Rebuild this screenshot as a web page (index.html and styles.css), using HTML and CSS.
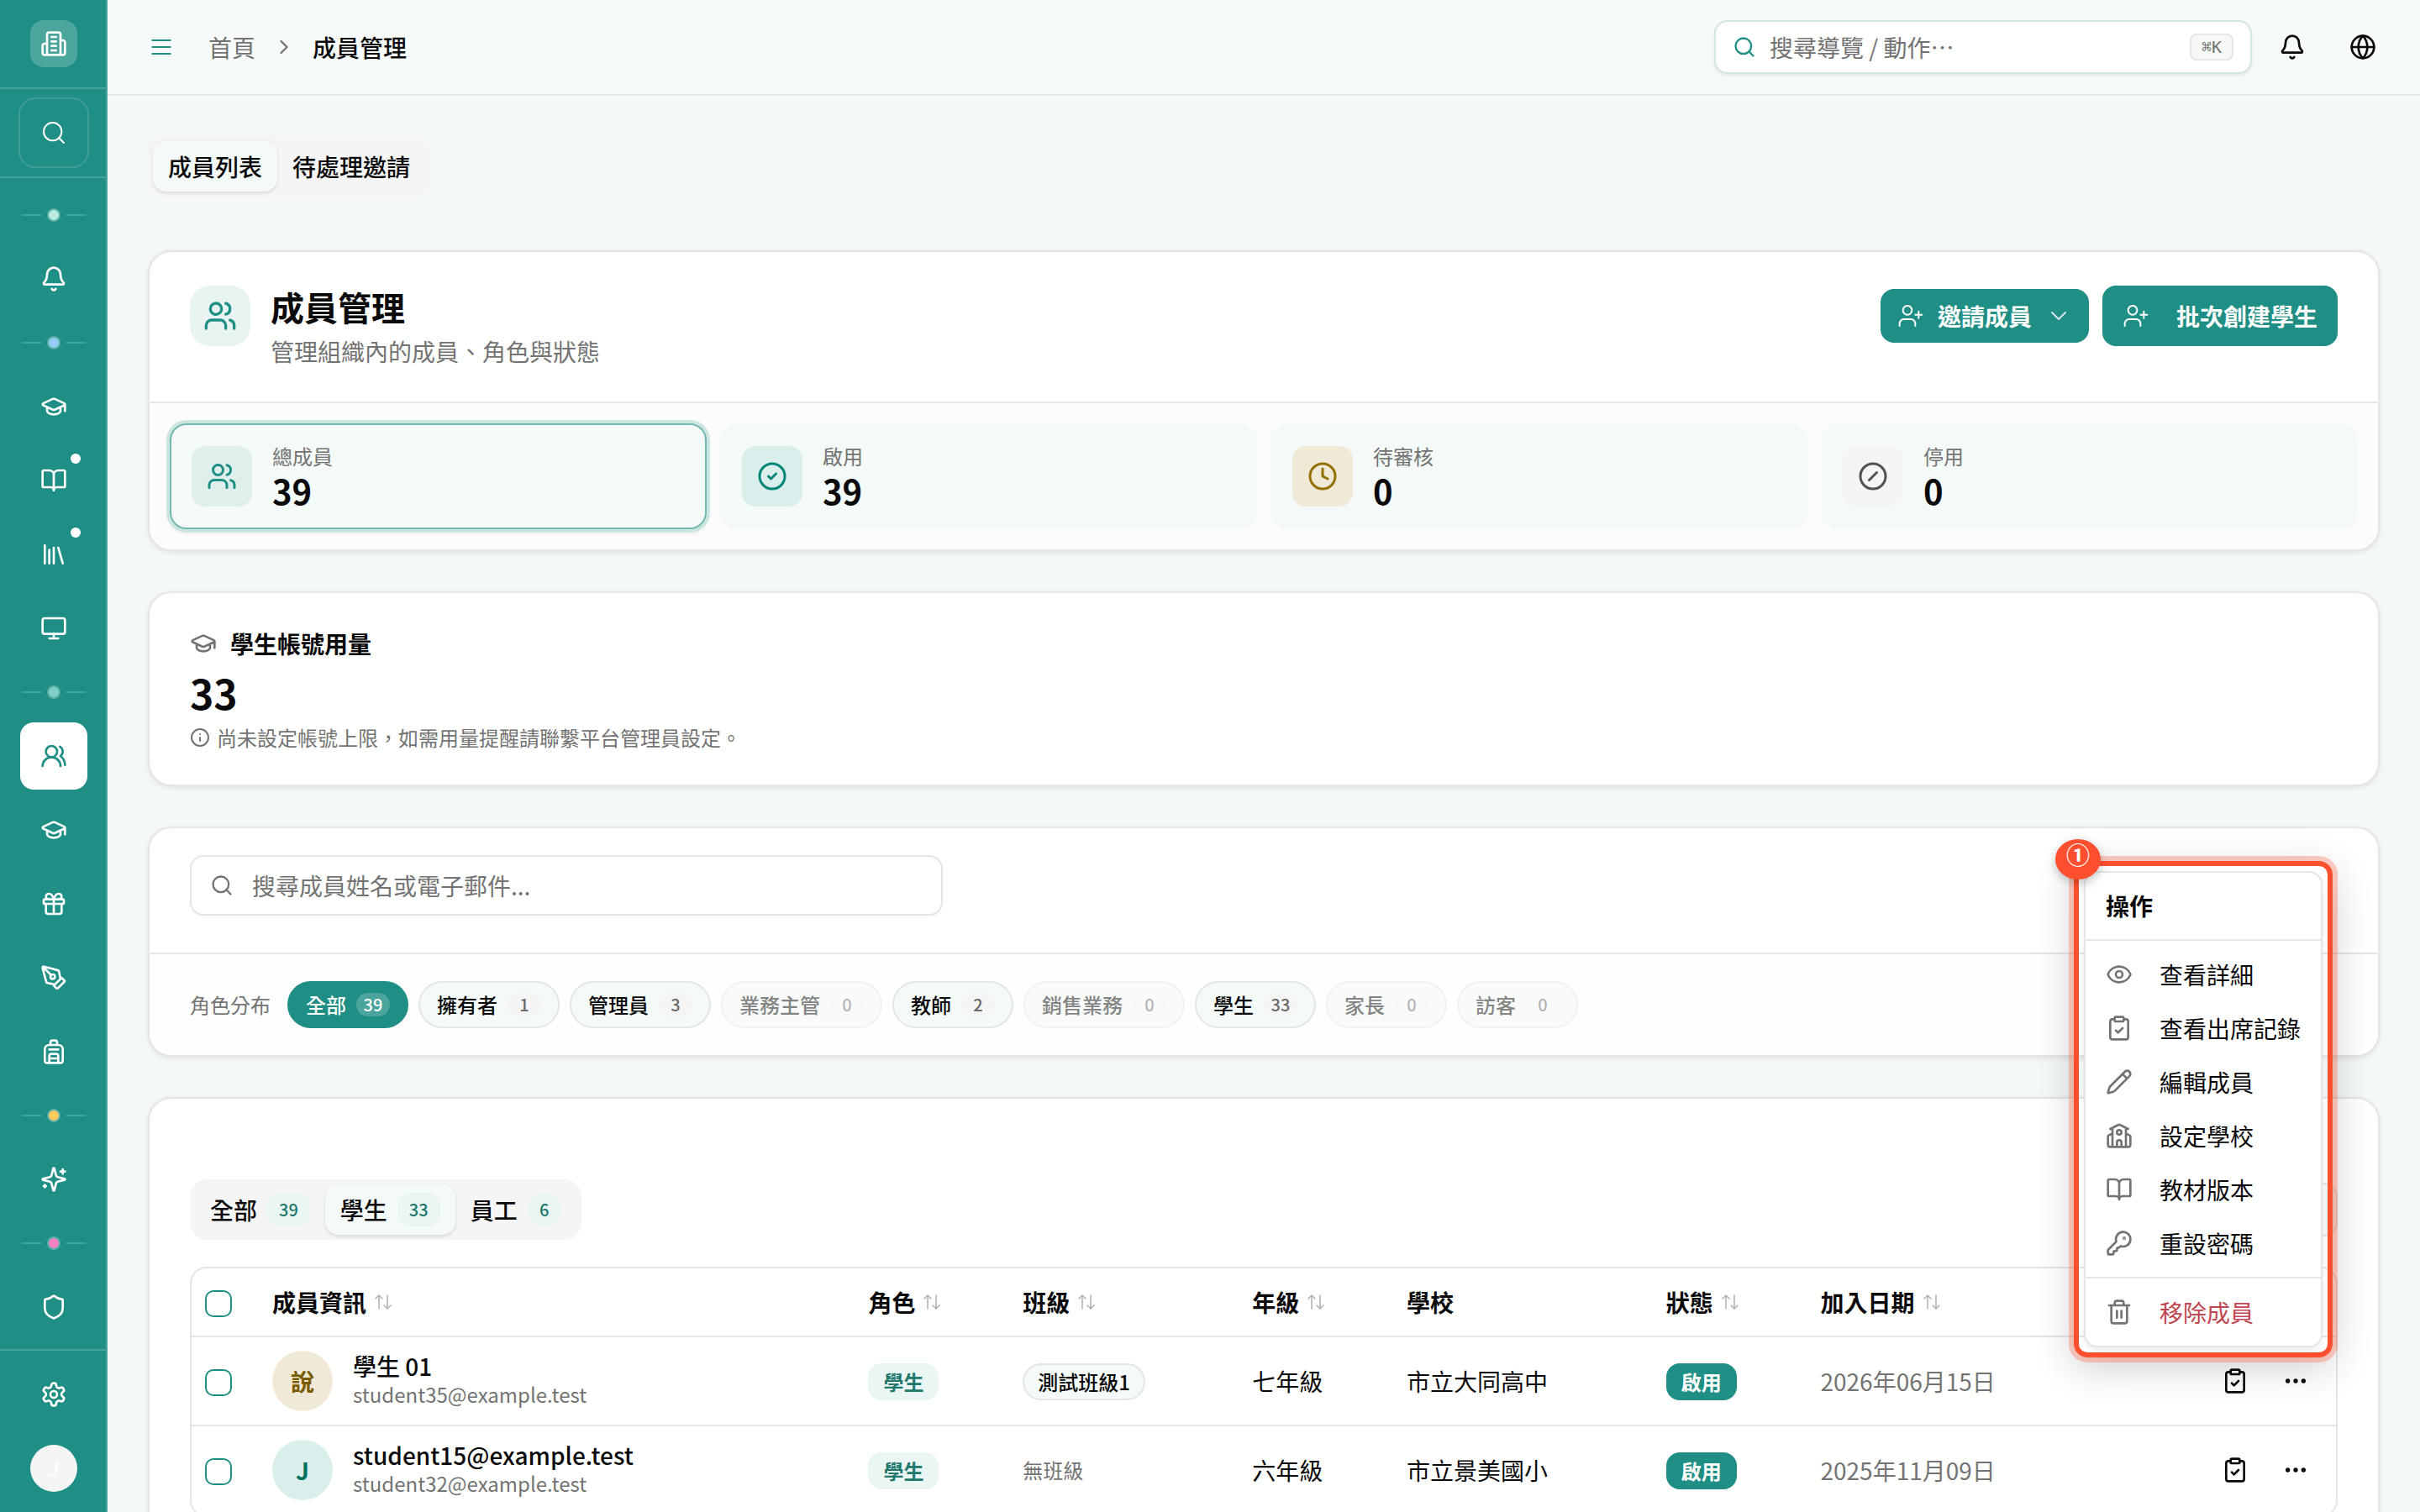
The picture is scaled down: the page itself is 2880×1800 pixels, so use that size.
FILE: index.html
```html
<!DOCTYPE html>
<html lang="zh-Hant-TW">
<head>
<meta charset="utf-8">
<meta name="viewport" content="width=device-width, initial-scale=1">
<title>成員管理</title>
<link rel="stylesheet" href="styles.css">
</head>
<body>
<svg class="sprite" aria-hidden="true">
  <symbol id="i-building" viewBox="0 0 24 24"><path d="M6 22V4a2 2 0 0 1 2-2h8a2 2 0 0 1 2 2v18ZM6 12H4a2 2 0 0 0-2 2v6a2 2 0 0 0 2 2h2M18 9h2a2 2 0 0 1 2 2v9a2 2 0 0 1-2 2h-2M10 6h4M10 10h4M10 14h4M10 18h4"/></symbol>
  <symbol id="i-search" viewBox="0 0 24 24"><circle cx="11" cy="11" r="8"/><path d="m21 21-4.34-4.34"/></symbol>
  <symbol id="i-bell" viewBox="0 0 24 24"><path d="M10.268 21a2 2 0 0 0 3.464 0M3.262 15.326A1 1 0 0 0 4 17h16a1 1 0 0 0 .74-1.673C19.41 13.956 18 12.499 18 8A6 6 0 0 0 6 8c0 4.499-1.411 5.956-2.738 7.326"/></symbol>
  <symbol id="i-cap" viewBox="0 0 24 24"><path d="M21.42 10.922a1 1 0 0 0-.019-1.838L12.83 5.18a2 2 0 0 0-1.66 0L2.6 9.08a1 1 0 0 0 0 1.832l8.57 3.908a2 2 0 0 0 1.66 0zM22 10v6M6 12.5V16a6 3 0 0 0 12 0v-3.5"/></symbol>
  <symbol id="i-book" viewBox="0 0 24 24"><path d="M12 7v14M3 18a1 1 0 0 1-1-1V4a1 1 0 0 1 1-1h5a4 4 0 0 1 4 4 4 4 0 0 1 4-4h5a1 1 0 0 1 1 1v13a1 1 0 0 1-1 1h-6a3 3 0 0 0-3 3 3 3 0 0 0-3-3z"/></symbol>
  <symbol id="i-library" viewBox="0 0 24 24"><path d="m16 6 4 14M12 6v14M8 8v12M4 4v16"/></symbol>
  <symbol id="i-monitor" viewBox="0 0 24 24"><rect x="2" y="3" width="20" height="14" rx="2"/><path d="M8 21h8M12 17v4"/></symbol>
  <symbol id="i-users-round" viewBox="0 0 24 24"><path d="M18 21a8 8 0 0 0-16 0"/><circle cx="10" cy="8" r="5"/><path d="M22 20c0-3.37-2-6.5-4-8a5 5 0 0 0-.45-8.3"/></symbol>
  <symbol id="i-gift" viewBox="0 0 24 24"><rect x="3" y="8" width="18" height="4" rx="1"/><path d="M12 8v13M19 12v7a2 2 0 0 1-2 2H7a2 2 0 0 1-2-2v-7M7.5 8a2.5 2.5 0 0 1 0-5A4.8 8 0 0 1 12 8a4.8 8 0 0 1 4.5-5 2.5 2.5 0 0 1 0 5"/></symbol>
  <symbol id="i-pen-tool" viewBox="0 0 24 24"><path d="M15.707 21.293a1 1 0 0 1-1.414 0l-1.586-1.586a1 1 0 0 1 0-1.414l5.586-5.586a1 1 0 0 1 1.414 0l1.586 1.586a1 1 0 0 1 0 1.414zM18 13l-1.375-6.874a1 1 0 0 0-.746-.776L3.235 2.028a1 1 0 0 0-1.207 1.207L5.35 15.879a1 1 0 0 0 .776.746L13 18M2.3 2.3l7.286 7.286"/><circle cx="11" cy="11" r="2"/></symbol>
  <symbol id="i-backpack" viewBox="0 0 24 24"><path d="M4 10a4 4 0 0 1 4-4h8a4 4 0 0 1 4 4v10a2 2 0 0 1-2 2H6a2 2 0 0 1-2-2zM8 10h8M8 18h8M8 22v-6a2 2 0 0 1 2-2h4a2 2 0 0 1 2 2v6M9 6V4a2 2 0 0 1 2-2h2a2 2 0 0 1 2 2v2"/></symbol>
  <symbol id="i-sparkles" viewBox="0 0 24 24"><path d="M9.937 15.5A2 2 0 0 0 8.5 14.063l-6.135-1.582a.5.5 0 0 1 0-.962L8.5 9.936A2 2 0 0 0 9.937 8.5l1.582-6.135a.5.5 0 0 1 .963 0L14.063 8.5A2 2 0 0 0 15.5 9.937l6.135 1.581a.5.5 0 0 1 0 .964L15.5 14.063a2 2 0 0 0-1.437 1.437l-1.582 6.135a.5.5 0 0 1-.963 0zM20 3v4M22 5h-4M4 17v2M5 18H3"/></symbol>
  <symbol id="i-shield" viewBox="0 0 24 24"><path d="M20 13c0 5-3.5 7.5-7.66 8.95a1 1 0 0 1-.67-.01C7.5 20.5 4 18 4 13V6a1 1 0 0 1 1-1c2 0 4.5-1.2 6.24-2.72a1.17 1.17 0 0 1 1.52 0C14.51 3.81 17 5 19 5a1 1 0 0 1 1 1z"/></symbol>
  <symbol id="i-settings" viewBox="0 0 24 24"><path d="M12.22 2h-.44a2 2 0 0 0-2 2v.18a2 2 0 0 1-1 1.73l-.43.25a2 2 0 0 1-2 0l-.15-.08a2 2 0 0 0-2.73.73l-.22.38a2 2 0 0 0 .73 2.73l.15.1a2 2 0 0 1 1 1.72v.51a2 2 0 0 1-1 1.74l-.15.09a2 2 0 0 0-.73 2.73l.22.38a2 2 0 0 0 2.73.73l.15-.08a2 2 0 0 1 2 0l.43.25a2 2 0 0 1 1 1.73V20a2 2 0 0 0 2 2h.44a2 2 0 0 0 2-2v-.18a2 2 0 0 1 1-1.73l.43-.25a2 2 0 0 1 2 0l.15.08a2 2 0 0 0 2.73-.73l.22-.39a2 2 0 0 0-.73-2.73l-.15-.08a2 2 0 0 1-1-1.74v-.5a2 2 0 0 1 1-1.74l.15-.09a2 2 0 0 0 .73-2.73l-.22-.38a2 2 0 0 0-2.73-.73l-.15.08a2 2 0 0 1-2 0l-.43-.25a2 2 0 0 1-1-1.73V4a2 2 0 0 0-2-2z"/><circle cx="12" cy="12" r="3"/></symbol>
  <symbol id="i-menu" viewBox="0 0 24 24"><path d="M4 6h16M4 12h16M4 18h16"/></symbol>
  <symbol id="i-chevron-right" viewBox="0 0 24 24"><path d="m9 18 6-6-6-6"/></symbol>
  <symbol id="i-chevron-down" viewBox="0 0 24 24"><path d="m6 9 6 6 6-6"/></symbol>
  <symbol id="i-globe" viewBox="0 0 24 24"><circle cx="12" cy="12" r="10"/><path d="M12 2a14.5 14.5 0 0 0 0 20 14.5 14.5 0 0 0 0-20M2 12h20"/></symbol>
  <symbol id="i-users" viewBox="0 0 24 24"><path d="M16 21v-2a4 4 0 0 0-4-4H6a4 4 0 0 0-4 4v2"/><circle cx="9" cy="7" r="4"/><path d="M22 21v-2a4 4 0 0 0-3-3.87M16 3.13a4 4 0 0 1 0 7.75"/></symbol>
  <symbol id="i-user-plus" viewBox="0 0 24 24"><path d="M16 21v-2a4 4 0 0 0-4-4H6a4 4 0 0 0-4 4v2"/><circle cx="9" cy="7" r="4"/><path d="M19 8v6M22 11h-6"/></symbol>
  <symbol id="i-check-circle" viewBox="0 0 24 24"><circle cx="12" cy="12" r="10"/><path d="m9 12 2 2 4-4"/></symbol>
  <symbol id="i-clock" viewBox="0 0 24 24"><circle cx="12" cy="12" r="10"/><path d="M12 6v6l4 2"/></symbol>
  <symbol id="i-slash-circle" viewBox="0 0 24 24"><circle cx="12" cy="12" r="10"/><path d="m9 15 6-6"/></symbol>
  <symbol id="i-info" viewBox="0 0 24 24"><circle cx="12" cy="12" r="10"/><path d="M12 16v-4M12 8h.01"/></symbol>
  <symbol id="i-sort" viewBox="0 0 24 24"><path d="m21 16-4 4-4-4M17 20V4M3 8l4-4 4 4M7 4v16"/></symbol>
  <symbol id="i-eye" viewBox="0 0 24 24"><path d="M2.062 12.348a1 1 0 0 1 0-.696 10.75 10.75 0 0 1 19.876 0 1 1 0 0 1 0 .696 10.75 10.75 0 0 1-19.876 0"/><circle cx="12" cy="12" r="3"/></symbol>
  <symbol id="i-clipboard" viewBox="0 0 24 24"><rect x="8" y="2" width="8" height="4" rx="1"/><path d="M16 4h2a2 2 0 0 1 2 2v14a2 2 0 0 1-2 2H6a2 2 0 0 1-2-2V6a2 2 0 0 1 2-2h2M9 14l2 2 4-4"/></symbol>
  <symbol id="i-pencil" viewBox="0 0 24 24"><path d="M21.174 6.812a1 1 0 0 0-3.986-3.987L3.842 16.174a2 2 0 0 0-.5.83l-1.321 4.352a.5.5 0 0 0 .623.622l4.353-1.32a2 2 0 0 0 .83-.497zM15 5l4 4"/></symbol>
  <symbol id="i-school" viewBox="0 0 24 24"><path d="M14 22v-4a2 2 0 1 0-4 0v4M18 10l3.447 1.724a1 1 0 0 1 .553.894V20a2 2 0 0 1-2 2H4a2 2 0 0 1-2-2v-7.382a1 1 0 0 1 .553-.894L6 10M18 5v17M4 6l7.106-3.553a2 2 0 0 1 1.788 0L20 6M6 5v17"/><circle cx="12" cy="9" r="2"/></symbol>
  <symbol id="i-key" viewBox="0 0 24 24"><path d="M2.586 17.414A2 2 0 0 0 2 18.828V21a1 1 0 0 0 1 1h3a1 1 0 0 0 1-1v-1a1 1 0 0 1 1-1h1a1 1 0 0 0 1-1v-1a1 1 0 0 1 1-1h.172a2 2 0 0 0 1.414-.586l.814-.814a6.5 6.5 0 1 0-4-4z"/><circle cx="16.5" cy="7.5" r=".5"/></symbol>
  <symbol id="i-trash" viewBox="0 0 24 24"><path d="M3 6h18M19 6v14a2 2 0 0 1-2 2H7a2 2 0 0 1-2-2V6M8 6V4a2 2 0 0 1 2-2h4a2 2 0 0 1 2 2v2M10 11v6M14 11v6"/></symbol>
  <symbol id="i-dots" viewBox="0 0 24 24"><circle cx="12" cy="12" r="1"/><circle cx="19" cy="12" r="1"/><circle cx="5" cy="12" r="1"/></symbol>
</svg>

<div class="app">
  <aside class="sidebar">
    <div class="sidebar-brand"><a class="brand" href="#" aria-label="組織"><svg class="icon"><use href="#i-building"/></svg></a></div>
    <div class="sidebar-search"><button class="side-search-btn" type="button" aria-label="搜尋"><svg class="icon thin"><use href="#i-search"/></svg></button></div>
    <nav class="sidebar-nav" aria-label="主選單">
      <div class="nav-sep dot-mint"><i></i></div>
      <a class="nav-item" href="#" aria-label="通知"><svg class="icon"><use href="#i-bell"/></svg></a>
      <div class="nav-sep dot-blue"><i></i></div>
      <div class="nav-group">
        <a class="nav-item" href="#" aria-label="課程"><svg class="icon"><use href="#i-cap"/></svg></a>
        <a class="nav-item has-dot" href="#" aria-label="教材"><svg class="icon"><use href="#i-book"/></svg></a>
        <a class="nav-item has-dot" href="#" aria-label="題庫"><svg class="icon"><use href="#i-library"/></svg></a>
        <a class="nav-item" href="#" aria-label="螢幕"><svg class="icon"><use href="#i-monitor"/></svg></a>
      </div>
      <div class="nav-sep dot-teal"><i></i></div>
      <div class="nav-group">
        <a class="nav-item active" href="#" aria-label="成員管理" aria-current="page"><svg class="icon"><use href="#i-users-round"/></svg></a>
        <a class="nav-item" href="#" aria-label="班級"><svg class="icon"><use href="#i-cap"/></svg></a>
        <a class="nav-item" href="#" aria-label="獎勵"><svg class="icon"><use href="#i-gift"/></svg></a>
        <a class="nav-item" href="#" aria-label="設計"><svg class="icon"><use href="#i-pen-tool"/></svg></a>
        <a class="nav-item" href="#" aria-label="書包"><svg class="icon"><use href="#i-backpack"/></svg></a>
      </div>
      <div class="nav-sep dot-amber"><i></i></div>
      <a class="nav-item" href="#" aria-label="AI 工具"><svg class="icon"><use href="#i-sparkles"/></svg></a>
      <div class="nav-sep dot-pink"><i></i></div>
      <a class="nav-item" href="#" aria-label="權限"><svg class="icon"><use href="#i-shield"/></svg></a>
    </nav>
    <div class="sidebar-foot">
      <a class="nav-item" href="#" aria-label="設定"><svg class="icon"><use href="#i-settings"/></svg></a>
      <button class="me" type="button">J</button>
    </div>
  </aside>

  <div class="page">
    <header class="topbar">
      <button class="menu-btn" type="button" aria-label="切換側欄"><svg class="icon thin"><use href="#i-menu"/></svg></button>
      <nav class="crumbs" aria-label="麵包屑">
        <a href="#">首頁</a>
        <svg class="icon s28"><use href="#i-chevron-right"/></svg>
        <span aria-current="page">成員管理</span>
      </nav>
      <label class="global-search">
        <svg class="icon s28"><use href="#i-search"/></svg>
        <input type="text" placeholder="搜尋導覽 / 動作⋯" aria-label="搜尋導覽 / 動作">
        <kbd>⌘K</kbd>
      </label>
      <div class="top-actions">
        <button class="icon-btn" type="button" aria-label="通知"><svg class="icon"><use href="#i-bell"/></svg></button>
        <button class="icon-btn" type="button" aria-label="語言"><svg class="icon"><use href="#i-globe"/></svg></button>
      </div>
    </header>

    <main class="content">
      <div class="tabs page-tabs" role="tablist">
        <button class="tab active" type="button" role="tab" aria-selected="true">成員列表</button>
        <button class="tab" type="button" role="tab" aria-selected="false">待處理邀請</button>
      </div>

      <section class="card">
        <div class="intro">
          <span class="intro-icon"><svg class="icon s40"><use href="#i-users"/></svg></span>
          <div class="intro-text">
            <h1>成員管理</h1>
            <p>管理組織內的成員、角色與狀態</p>
          </div>
          <div class="intro-actions">
            <button class="btn" type="button"><svg class="icon thin"><use href="#i-user-plus"/></svg>邀請成員<svg class="icon thin faded"><use href="#i-chevron-down"/></svg></button>
            <button class="btn btn-lg" type="button"><svg class="icon thin"><use href="#i-user-plus"/></svg>批次創建學生</button>
          </div>
        </div>
        <div class="stats">
          <button class="stat selected" type="button"><span class="stat-icon primary"><svg class="icon s36"><use href="#i-users"/></svg></span><span class="stat-text"><span class="stat-label">總成員</span><strong>39</strong></span></button>
          <button class="stat" type="button"><span class="stat-icon ok"><svg class="icon s36"><use href="#i-check-circle"/></svg></span><span class="stat-text"><span class="stat-label">啟用</span><strong>39</strong></span></button>
          <button class="stat" type="button"><span class="stat-icon wait"><svg class="icon s36"><use href="#i-clock"/></svg></span><span class="stat-text"><span class="stat-label">待審核</span><strong>0</strong></span></button>
          <button class="stat" type="button"><span class="stat-icon off"><svg class="icon s36"><use href="#i-slash-circle"/></svg></span><span class="stat-text"><span class="stat-label">停用</span><strong>0</strong></span></button>
        </div>
      </section>

      <section class="card usage">
        <h2><svg class="icon"><use href="#i-cap"/></svg>學生帳號用量</h2>
        <strong class="usage-count">33</strong>
        <p><svg class="icon s24"><use href="#i-info"/></svg>尚未設定帳號上限，如需用量提醒請聯繫平台管理員設定。</p>
      </section>

      <section class="card">
        <div class="filter-search">
          <label class="search-box">
            <svg class="icon s28"><use href="#i-search"/></svg>
            <input type="text" placeholder="搜尋成員姓名或電子郵件..." aria-label="搜尋成員姓名或電子郵件">
          </label>
        </div>
        <div class="roles">
          <span class="roles-label">角色分布</span>
          <div class="chips">
            <button class="chip active" type="button">全部<span>39</span></button>
            <button class="chip" type="button">擁有者<span>1</span></button>
            <button class="chip" type="button">管理員<span>3</span></button>
            <button class="chip" type="button" disabled>業務主管<span>0</span></button>
            <button class="chip" type="button">教師<span>2</span></button>
            <button class="chip" type="button" disabled>銷售業務<span>0</span></button>
            <button class="chip" type="button">學生<span>33</span></button>
            <button class="chip" type="button" disabled>家長<span>0</span></button>
            <button class="chip" type="button" disabled>訪客<span>0</span></button>
          </div>
        </div>
      </section>

      <section class="card list">
        <div class="list-head">
          <div class="tabs" role="tablist">
            <button class="tab" type="button" role="tab" aria-selected="false">全部<span>39</span></button>
            <button class="tab active" type="button" role="tab" aria-selected="true">學生<span>33</span></button>
            <button class="tab" type="button" role="tab" aria-selected="false">員工<span>6</span></button>
          </div>
          <button class="columns-btn" type="button" aria-label="顯示欄位"></button>
        </div>
        <div class="table-wrap">
          <table>
            <colgroup><col class="c-check"><col class="c-info"><col class="c-role"><col class="c-class"><col class="c-grade"><col class="c-school"><col class="c-status"><col class="c-date"><col class="c-act"></colgroup>
            <thead>
              <tr>
                <th><input type="checkbox" aria-label="全選"></th>
                <th><button class="sort" type="button">成員資訊<svg class="icon s24 thin"><use href="#i-sort"/></svg></button></th>
                <th><button class="sort" type="button">角色<svg class="icon s24 thin"><use href="#i-sort"/></svg></button></th>
                <th><button class="sort" type="button">班級<svg class="icon s24 thin"><use href="#i-sort"/></svg></button></th>
                <th><button class="sort" type="button">年級<svg class="icon s24 thin"><use href="#i-sort"/></svg></button></th>
                <th>學校</th>
                <th><button class="sort" type="button">狀態<svg class="icon s24 thin"><use href="#i-sort"/></svg></button></th>
                <th><button class="sort" type="button">加入日期<svg class="icon s24 thin"><use href="#i-sort"/></svg></button></th>
                <th></th>
              </tr>
            </thead>
            <tbody>
              <tr>
                <td><input type="checkbox" aria-label="選取 學生 01"></td>
                <td><div class="member"><span class="avatar sand">說</span><div class="member-text"><div class="member-name">學生 01</div><div class="member-mail">student35@example.test</div></div></div></td>
                <td><span class="badge soft">學生</span></td>
                <td><span class="badge outline">測試班級1</span></td>
                <td>七年級</td>
                <td>市立大同高中</td>
                <td><span class="badge solid">啟用</span></td>
                <td class="muted">2026年06月15日</td>
                <td>
                  <div class="row-actions">
                    <button class="row-btn" type="button" aria-label="出席記錄"><svg class="icon"><use href="#i-clipboard"/></svg></button>
                    <button class="row-btn" type="button" aria-label="更多操作"><svg class="icon"><use href="#i-dots"/></svg></button>
                    <div class="callout">
                      <span class="callout-no">①</span>
                      <div class="menu" role="menu" aria-label="操作">
                        <div class="menu-title">操作</div>
                        <div class="menu-group">
                          <button type="button" role="menuitem"><svg class="icon"><use href="#i-eye"/></svg>查看詳細</button>
                          <button type="button" role="menuitem"><svg class="icon"><use href="#i-clipboard"/></svg>查看出席記錄</button>
                          <button type="button" role="menuitem"><svg class="icon"><use href="#i-pencil"/></svg>編輯成員</button>
                          <button type="button" role="menuitem"><svg class="icon"><use href="#i-school"/></svg>設定學校</button>
                          <button type="button" role="menuitem"><svg class="icon"><use href="#i-book"/></svg>教材版本</button>
                          <button type="button" role="menuitem"><svg class="icon"><use href="#i-key"/></svg>重設密碼</button>
                        </div>
                        <div class="menu-group">
                          <button class="danger" type="button" role="menuitem"><svg class="icon"><use href="#i-trash"/></svg>移除成員</button>
                        </div>
                      </div>
                    </div>
                  </div>
                </td>
              </tr>
              <tr>
                <td><input type="checkbox" aria-label="選取 student15@example.test"></td>
                <td><div class="member"><span class="avatar mint">J</span><div class="member-text"><div class="member-name">student15@example.test</div><div class="member-mail">student32@example.test</div></div></div></td>
                <td><span class="badge soft">學生</span></td>
                <td class="muted small">無班級</td>
                <td>六年級</td>
                <td>市立景美國小</td>
                <td><span class="badge solid">啟用</span></td>
                <td class="muted">2025年11月09日</td>
                <td>
                  <div class="row-actions">
                    <button class="row-btn" type="button" aria-label="出席記錄"><svg class="icon"><use href="#i-clipboard"/></svg></button>
                    <button class="row-btn" type="button" aria-label="更多操作"><svg class="icon"><use href="#i-dots"/></svg></button>
                  </div>
                </td>
              </tr>
            </tbody>
          </table>
        </div>
      </section>
    </main>
  </div>
</div>
</body>
</html>
```
FILE: styles.css
```css
:root {
  --teal: #1f8f85;
  --ink: #0a0a0a;
  --muted: #737373;
  --line: #e5e5e5;
  --tint: #f4faf8;
  --page: #f4f8f7;
}

*, *::before, *::after { box-sizing: border-box; }

body {
  margin: 0;
  background: var(--page);
  color: var(--ink);
  font-family: "Noto Sans CJK TC", "Noto Sans", sans-serif;
  font-size: 28px;
  line-height: 40px;
}

button, input { font: inherit; color: inherit; }
button { margin: 0; padding: 0; border: 0; background: none; text-align: left; white-space: nowrap; cursor: pointer; }
a { color: inherit; text-decoration: none; }
h1, h2, p { margin: 0; }

.sprite { position: absolute; width: 0; height: 0; }

.icon {
  flex: none;
  width: 32px;
  height: 32px;
  fill: none;
  stroke: currentColor;
  stroke-width: 2;
  stroke-linecap: round;
  stroke-linejoin: round;
}
.icon.thin { stroke-width: 1.5; }
.icon.s24 { width: 24px; height: 24px; }
.icon.s28 { width: 28px; height: 28px; }
.icon.s36 { width: 36px; height: 36px; }
.icon.s40 { width: 40px; height: 40px; }
.icon.faded { opacity: .8; }

.app { display: flex; height: 100vh; overflow: hidden; }

/* Sidebar */
.sidebar {
  flex: none;
  display: flex;
  flex-direction: column;
  width: 128px;
  background: var(--teal);
  box-shadow: inset -2px 0 #4ba59d;
  color: #fff;
}
.sidebar-brand {
  display: flex;
  justify-content: center;
  align-items: center;
  height: 106px;
  border-bottom: 2px solid #45a299;
}
.brand {
  display: grid;
  place-items: center;
  width: 56px;
  height: 56px;
  border-radius: 16px;
  background: #4da69e;
}
.sidebar-search {
  display: flex;
  justify-content: center;
  padding: 10px 0;
  border-bottom: 2px solid #45a299;
}
.side-search-btn {
  display: grid;
  place-items: center;
  width: 84px;
  height: 84px;
  border: 2px solid #3d9d94;
  border-radius: 20px;
}
.sidebar-nav {
  flex: 1;
  display: flex;
  flex-direction: column;
  align-items: center;
  gap: 28px;
  padding-top: 36px;
}
.nav-group { display: flex; flex-direction: column; gap: 8px; }
.nav-item {
  position: relative;
  display: grid;
  place-items: center;
  width: 80px;
  height: 80px;
  border-radius: 16px;
}
.nav-item.active { background: #fff; color: var(--teal); }
.nav-item.has-dot::after {
  content: "";
  position: absolute;
  top: 8px;
  right: 8px;
  width: 12px;
  height: 12px;
  border-radius: 50%;
  background: #fff;
}
.nav-sep { display: flex; align-items: center; gap: 6px; width: 76px; height: 16px; }
.nav-sep::before, .nav-sep::after { content: ""; flex: 1; height: 2px; background: #45a299; }
.nav-sep i { width: 16px; height: 16px; border: 2px solid #5bb0a8; border-radius: 50%; }
.dot-mint i { background: #b9ebdf; }
.dot-blue i { background: #94cdf3; }
.dot-teal i { background: #7fcdc6; }
.dot-amber i { background: #fdca62; }
.dot-pink i { background: #f182bf; }
.sidebar-foot {
  display: flex;
  flex-direction: column;
  align-items: center;
  gap: 20px;
  padding: 12px 0 24px;
  border-top: 2px solid #45a299;
}
.me {
  width: 56px;
  height: 56px;
  border-radius: 50%;
  background: #f5f5f5;
  color: #fff;
  font-size: 24px;
  text-align: center;
}

/* Top bar */
.page { flex: 1; min-width: 0; }
.topbar {
  display: flex;
  align-items: center;
  height: 114px;
  padding: 0 36px 0 48px;
  border-bottom: 2px solid #e2e6e5;
  background: #f6fbf9;
}
.menu-btn { display: flex; margin-right: 40px; color: var(--teal); }
.crumbs { flex: 1; display: flex; align-items: center; gap: 20px; color: var(--muted); }
.crumbs span { color: var(--ink); font-weight: 500; }
.global-search {
  display: flex;
  align-items: center;
  gap: 16px;
  width: 640px;
  height: 64px;
  padding: 0 20px;
  border: 2px solid #cfe8e1;
  border-radius: 16px;
  background: #fff;
  box-shadow: 0 2px 4px rgba(0, 0, 0, .08);
  color: var(--teal);
}
.global-search input { flex: 1; min-width: 0; padding: 0; border: 0; outline: 0; background: none; }
input::placeholder { color: var(--muted); opacity: 1; }
kbd {
  height: 32px;
  padding: 0 12px;
  border: 2px solid var(--line);
  border-radius: 8px;
  background: #f7f7f5;
  color: var(--muted);
  font: 20px/28px "DejaVu Sans Mono", monospace;
}
.top-actions { display: flex; gap: 20px; margin-left: 16px; }
.icon-btn { display: grid; place-items: center; width: 64px; height: 64px; }

/* Content */
.content { display: flex; flex-direction: column; align-items: stretch; gap: 48px; padding: 48px; }
.tabs {
  display: flex;
  align-self: flex-start;
  padding: 6px;
  border-radius: 20px;
  background: #f5f5f5;
}
.page-tabs { margin-bottom: 16px; }
.tab {
  display: flex;
  align-items: center;
  gap: 12px;
  height: 60px;
  padding: 0 18px;
  border-radius: 16px;
  font-weight: 500;
}
.tab.active { background: var(--tint); box-shadow: 0 2px 4px rgba(0, 0, 0, .12); }
.tab span {
  min-width: 40px;
  padding: 0 14px;
  border-radius: 16px;
  background: #e9f6f3;
  color: #20776b;
  font-size: 20px;
  text-align: center;
}

.card {
  border: 2px solid var(--line);
  border-radius: 28px;
  background: #fff;
  box-shadow: 0 2px 6px rgba(0, 0, 0, .09);
}
.intro { display: flex; gap: 24px; padding: 40px 48px; }
.intro-icon {
  display: grid;
  place-items: center;
  width: 72px;
  height: 72px;
  border-radius: 24px;
  background: #e8f4f2;
  color: var(--teal);
}
.intro-text { flex: 1; }
h1 { margin-bottom: 8px; font-size: 40px; line-height: 50px; font-weight: 700; }
.intro-text p { color: var(--muted); }
.intro-actions { display: flex; align-items: center; gap: 16px; height: 72px; }
.btn {
  display: flex;
  align-items: center;
  gap: 16px;
  height: 64px;
  padding: 0 20px;
  border-radius: 16px;
  background: var(--teal);
  color: #fff;
  font-weight: 700;
}
.btn-lg { gap: 32px; height: 72px; padding: 0 24px; }

.stats {
  display: grid;
  grid-template-columns: repeat(4, 1fr);
  gap: 16px;
  padding: 24px;
  border-top: 2px solid var(--line);
  border-radius: 0 0 26px 26px;
  background: #fcfcfc;
}
.stat {
  display: flex;
  align-items: center;
  gap: 24px;
  height: 126px;
  padding: 0 24px;
  border: 2px solid transparent;
  border-radius: 20px;
  background: var(--tint) border-box;
}
.stat.selected { border-color: #74b9b1; box-shadow: 0 0 0 4px #cbe5e1, 0 4px 6px rgba(0, 0, 0, .1); }
.stat-icon { display: grid; place-items: center; width: 72px; height: 72px; border-radius: 16px; }
.stat-icon.primary { background: #dfefec; color: var(--teal); }
.stat-icon.ok { background: #daefeb; color: #008577; }
.stat-icon.wait { background: #f1e9d8; color: #947000; }
.stat-icon.off { background: #f5f5f5; color: #525252; }
.stat-text { display: flex; flex-direction: column; gap: 2px; }
.stat-label { color: var(--muted); font-size: 24px; line-height: 32px; }
.stat strong { font-size: 40px; line-height: 46px; }

.usage { display: flex; flex-direction: column; gap: 4px; padding: 40px 48px; }
h2 { display: flex; align-items: center; gap: 16px; font-size: 28px; line-height: 40px; font-weight: 700; }
h2 .icon { color: var(--muted); }
.usage-count { font-size: 48px; line-height: 68px; }
.usage p { display: flex; align-items: center; gap: 8px; color: var(--muted); font-size: 24px; line-height: 32px; }

.filter-search { padding: 32px 48px 44px; }
.search-box {
  display: flex;
  align-items: center;
  gap: 22px;
  width: 896px;
  max-width: 100%;
  height: 72px;
  padding: 0 22px;
  border: 2px solid var(--line);
  border-radius: 16px;
  color: var(--muted);
  box-shadow: 0 2px 2px rgba(0, 0, 0, .03);
}
.search-box input { flex: 1; min-width: 0; padding: 0; border: 0; outline: 0; background: none; }
.roles {
  display: flex;
  align-items: center;
  gap: 20px;
  padding: 32px 48px;
  border-top: 2px solid var(--line);
  border-radius: 0 0 26px 26px;
  background: #fefefe;
}
.roles-label { color: var(--muted); font-size: 24px; }
.chips { display: flex; flex-wrap: wrap; gap: 12px; }
.chip {
  display: flex;
  align-items: center;
  gap: 12px;
  height: 56px;
  padding: 0 20px;
  border: 2px solid #e3e6e5;
  border-radius: 28px;
  background: var(--tint);
  font-size: 24px;
  font-weight: 500;
}
.chip span {
  min-width: 40px;
  border-radius: 14px;
  background: #f5f5f5;
  color: #6b6b6b;
  font-size: 20px;
  line-height: 28px;
  text-align: center;
}
.chip.active { border-color: var(--teal); background: var(--teal); color: #fff; }
.chip.active span { background: #4ca59d; color: #fff; }
.chip:disabled { color: var(--ink); opacity: .5; }

/* Member list */
.list { padding: 96px 48px 48px; }
.list-head { display: flex; justify-content: space-between; align-items: center; margin-bottom: 32px; }
.columns-btn { width: 160px; height: 64px; border: 2px solid var(--line); border-radius: 16px; background: var(--tint); }
.table-wrap { border: 2px solid var(--line); border-radius: 20px; }
table { width: 100%; table-layout: fixed; border-collapse: separate; border-spacing: 0; }
.c-check { width: 80px; }
.c-info { width: 27.8%; }
.c-role, .c-grade, .c-status { width: 7.2%; }
.c-class { width: 10.7%; }
.c-school { width: 12.1%; }
.c-act { width: 180px; }
th, td { padding: 0 16px; border-bottom: 2px solid var(--line); text-align: left; vertical-align: middle; white-space: nowrap; }
th { height: 82px; font-weight: 700; }
td { height: 106px; }
.sort { display: flex; align-items: center; gap: 8px; font-weight: 700; }
.sort .icon { color: #b0b0b0; }
input[type="checkbox"] {
  appearance: none;
  display: block;
  width: 32px;
  height: 32px;
  margin: 4px 0 0;
  border: 2px solid var(--teal);
  border-radius: 10px;
  background: #fff;
}
.member { display: flex; align-items: center; gap: 24px; }
.member-text { padding-bottom: 4px; }
.avatar { display: grid; place-items: center; width: 72px; height: 72px; border-radius: 50%; font-weight: 700; }
.avatar.sand { background: #f1e9d8; color: #7a5c00; }
.avatar.mint { background: #daefeb; color: #00705f; }
.member-name { line-height: 36px; font-weight: 500; }
.member-mail { color: var(--muted); font-size: 24px; line-height: 32px; }
.badge { display: inline-block; height: 44px; padding: 0 18px; border-radius: 16px; font-size: 24px; line-height: 44px; vertical-align: middle; }
.badge.soft { background: #e9f6f3; color: #20776b; font-weight: 700; }
.badge.outline { padding: 0 16px; border: 2px solid #e3e6e5; border-radius: 22px; background: var(--tint); line-height: 40px; font-weight: 500; }
.badge.solid { background: var(--teal); color: #fff; font-weight: 700; }
.muted { color: var(--muted); }
.small { font-size: 24px; }
.row-actions { position: relative; display: flex; justify-content: flex-end; gap: 8px; }
.row-btn { display: grid; place-items: center; width: 64px; height: 64px; }

/* Row menu with its numbered callout frame */
.callout {
  position: absolute;
  right: -12px;
  bottom: 60px;
  z-index: 2;
  padding: 6px;
  border: 6px solid #ff4f2e;
  border-radius: 16px;
  box-shadow: 0 0 0 6px rgba(255, 79, 46, .28), 0 12px 48px rgba(0, 0, 0, .2);
}
.callout-no {
  position: absolute;
  top: -32px;
  left: -28px;
  width: 54px;
  height: 48px;
  border-radius: 50%;
  background: #ff4f2e;
  box-shadow: 0 4px 12px rgba(0, 0, 0, .25);
  color: #fff;
  font-weight: 700;
  line-height: 36px;
  text-align: center;
}
.menu { width: 284px; border: 2px solid var(--line); border-radius: 16px; background: #fff; box-shadow: 0 4px 8px rgba(0, 0, 0, .08); }
.menu-title { padding: 0 24px; font-weight: 700; line-height: 79px; }
.menu-group { padding: 8px 0; border-top: 2px solid var(--line); }
.menu-group button { display: flex; align-items: center; gap: 32px; width: 100%; height: 64px; padding: 0 24px; }
.menu-group .icon { color: var(--muted); }
.menu-group .danger { color: #bf4650; }
```
